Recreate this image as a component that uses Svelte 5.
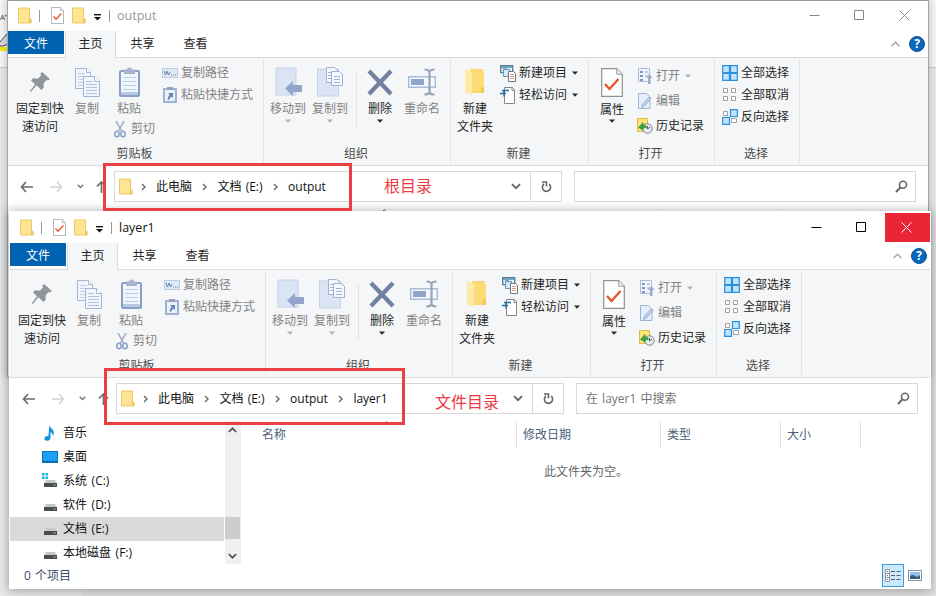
<script>
  const windows = [
    {
      id: 'root',
      title: 'output',
      path: ['此电脑', '文档 (E:)', 'output'],
      search: '',
      active: false
    },
    {
      id: 'layer',
      title: 'layer1',
      path: ['此电脑', '文档 (E:)', 'output', 'layer1'],
      search: '在 layer1 中搜索',
      active: true
    }
  ]

  const drives = [
    { name: '音乐', icon: 'music' },
    { name: '桌面', icon: 'desktop' },
    { name: '系统 (C:)', icon: 'system' },
    { name: '软件 (D:)', icon: 'drive' },
    { name: '文档 (E:)', icon: 'drive', selected: true },
    { name: '本地磁盘 (F:)', icon: 'drive' }
  ]
</script>

{#snippet folder()}
  <svg width="14" height="17" viewBox="0 0 14 17">
    <path d="M.5 1h11v11l1.5 .5v3.5H.5z" fill="#ffe593" stroke="#ecc964" />
    <path d="M11.5 15.5v-4l1.5 1v3z" fill="#f8d775" stroke="#e3b94c" stroke-width=".7" />
  </svg>
{/snippet}

{#snippet caret()}
  <svg class="caret" width="6" height="4" viewBox="0 0 6 4"><path d="M0 .5h6L3 3.7z" fill="currentColor" /></svg>
{/snippet}

{#snippet crumbArrow()}
  <svg width="5" height="8" viewBox="0 0 5 8"><path d="M1 1l3 3-3 3" fill="none" stroke="#666" stroke-width="1.4" /></svg>
{/snippet}

{#snippet checkDoc(w, h)}
  <svg width={w} height={h} viewBox="0 0 22 29" preserveAspectRatio="none">
    <path d="M.7 .7h15l5.6 5.6v22H.7z" fill="#fff" stroke="#8b929a" stroke-width="1.2" />
    <path d="M15.7 .7v5.600h5.600" fill="#eee" stroke="#9aa0a8" />
    <path d="M4 16l4.500 5L17.500 11" fill="none" stroke="#e4572a" stroke-width="2.4" />
  </svg>
{/snippet}

{#snippet ribbon()}
  <div class="ribbon">
    <section class="group clipboard">
      <div class="tools">
        <div class="big pin">
          <div class="pic">
            <svg width="22" height="22" viewBox="0 0 22 22">
              <path d="M13 1l8 7-2 1.500-1.500-.5-3 3.500.3 4L12.500 19l-5-4.800L1.800 21 .8 20.200l5.200-7L2 9.500l2-2.200 4.800.4L12 4.500l-.5-2z" fill="#8f969c" />
            </svg>
          </div>
          <span>固定到快</span><span>速访问</span>
        </div>
        <div class="big copy dim">
          <div class="pic">
            <svg width="25" height="29" viewBox="0 0 25 29">
              <g stroke="#93abd2">
                <path d="M.5 .5h11l4 4v16H.5z" fill="#f2f6fd" /><path d="M11.500 .5v4h4" fill="#fff" />
                <path d="M3 5.500h7M3 8.500h10M3 11.500h10M3 14.500h10M3 17.500h10" stroke="#b9cae5" />
                <path d="M8.500 8.500h11l5 5v15h-16z" fill="#f2f6fd" /><path d="M19.500 8.500v5h5" fill="#fff" />
                <path d="M11 13.500h6M11 16.500h11M11 19.500h11M11 22.500h11M11 25.500h11" stroke="#a5badb" />
              </g>
            </svg>
          </div>
          <span>复制</span>
        </div>
        <div class="paste dim">
          <div class="big">
            <div class="pic">
              <svg width="21" height="30" viewBox="0 0 21 30">
                <rect x="1" y="4" width="19" height="25" rx="1" fill="#f1f6fd" stroke="#7590bf" stroke-width="2" />
                <path d="M5 2.500h3a2.500 2 0 0 1 5 0h3V7H5z" fill="#9aa9c4" />
                <path d="M4 10.500h13M4 14.500h13M4 18.500h13M4 22.500h13" stroke="#b3c6e4" />
                <path d="M2 26.500h17" stroke="#afc0dc" stroke-width="3" />
              </svg>
            </div>
            <span>粘贴</span>
          </div>
          <div class="small cut">
            <svg width="12" height="17" viewBox="0 0 12 17">
              <path d="M2 0l5.500 10M10 0L4.500 10" stroke="#8e9fb9" stroke-width="1.5" />
              <ellipse cx="3" cy="13" rx="2.200" ry="2.800" fill="none" stroke="#7292c2" stroke-width="1.5" />
              <ellipse cx="9" cy="13" rx="2.200" ry="2.800" fill="none" stroke="#7292c2" stroke-width="1.5" />
            </svg>
            <span>剪切</span>
          </div>
        </div>
        <div class="stack paths dim">
          <div class="small">
            <svg width="16" height="10" viewBox="0 0 16 10">
              <rect x=".5" y=".5" width="15" height="9" fill="#d8e7fa" stroke="#b3c6df" />
              <path d="M2 3l1.500 4L5 3l1.500 4L8 4M9 7h1M11 7h1M13 7h1" fill="none" stroke="#526d96" />
            </svg>
            <span>复制路径</span>
          </div>
          <div class="small">
            <svg width="14" height="16" viewBox="0 0 14 16">
              <rect x="1" y="2" width="12" height="13" fill="#e9f1fc" stroke="#8fa7cf" stroke-width="2" />
              <path d="M4 0h6v3H4z" fill="#8292ad" />
              <path d="M5 6h5v5L8.400 9.400Q6.500 11 6 13L4.500 12Q5 9.500 6.700 7.700z" fill="#4d71ae" />
            </svg>
            <span>粘贴快捷方式</span>
          </div>
        </div>
      </div>
      <h2>剪贴板</h2>
    </section>

    <section class="group organize">
      <div class="tools">
        <div class="big dim move">
          <div class="pic">
            <svg width="27" height="30" viewBox="0 0 27 30">
              <path d="M1 1h20v27H1z" fill="#d6e2f5" stroke="#bccde7" />
              <path d="M10 21.500l8-7.500v4h9v7h-9v4z" fill="#8198c3" />
            </svg>
          </div>
          <span>移动到</span>{@render caret()}
        </div>
        <div class="big dim move">
          <div class="pic">
            <svg width="27" height="30" viewBox="0 0 27 30">
              <path d="M.5 2h21v27H.5z" fill="#d6e2f5" stroke="#bccde7" />
              <g fill="#f5f9ff" stroke="#8fa8cf">
                <path d="M9.500 .5h8l3 3v12h-11z" /><path d="M14.500 4.500h8l3 3v11h-11z" />
                <path d="M11 5.500h3M11 8.500h3M11 11.500h3M17 9.500h6M17 12.500h6M17 15.500h6" />
              </g>
            </svg>
          </div>
          <span>复制到</span>{@render caret()}
        </div>
        <div class="divider"></div>
        <div class="big delete">
          <div class="pic">
            <svg width="26" height="27" viewBox="0 0 26 27"><path d="M2 2l22 23M24 2L2 25" stroke="#7181a2" stroke-width="4.3" /></svg>
          </div>
          <span>删除</span>{@render caret()}
        </div>
        <div class="big dim rename">
          <div class="pic">
            <svg width="28" height="28" viewBox="0 0 28 28">
              <path d="M.7 8.700h26.600v10.600H.7z" fill="#f5f9ff" stroke="#9bb1d6" stroke-width="1.4" />
              <path d="M3 11h13v6H3z" fill="#7d97c2" />
              <path d="M16.500 1.500q4 0 5 2 1-2 5-2M21.500 3v22M16.500 26.500q4 0 5-2 1 2 5 2" fill="none" stroke="#8795ad" stroke-width="2.2" />
            </svg>
          </div>
          <span>重命名</span>
        </div>
      </div>
      <h2>组织</h2>
    </section>

    <section class="group create">
      <div class="tools">
        <div class="big">
          <div class="pic">
            <svg width="20" height="28" viewBox="0 0 20 28">
              <path d="M5 1h13v22l-3 2H5z" fill="#fbd873" />
              <path d="M0 1l7 3v23L0 24z" fill="#ffe9a6" />
              <path d="M7 4h12v19H7z" fill="#fddc75" /><path d="M16 19h3v6h-3z" fill="#f5c951" />
            </svg>
          </div>
          <span>新建</span><span>文件夹</span>
        </div>
        <div class="stack">
          <div class="small">
            <svg width="16" height="17" viewBox="0 0 16 17">
              <path d="M.7 .7h12v7H.7z" fill="#e5f1fb" stroke="#587b95" stroke-width="1.3" />
              <path d="M1 2h11M3 4h3v4" fill="none" stroke="#4d90b5" stroke-width="1.5" />
              <path d="M3.500 4.500h6v7h-6z" fill="#d2e9fb" stroke="#6d94b2" />
              <path d="M8.500 6.500h5l2 2v8h-7z" fill="#fff" stroke="#6f7880" />
              <path d="M10 9.500h4M10 11.500h4M10 13.500h4" stroke="#df9b8a" />
            </svg>
            <span>新建项目</span>{@render caret()}
          </div>
          <div class="small">
            <svg width="16" height="17" viewBox="0 0 16 17">
              <path d="M4.500 .5h8l2 2v14h-10z" fill="#fff" stroke="#80878d" />
              <path d="M12 1v2.500h2.500" fill="none" stroke="#80878d" />
              <path d="M2 3.500h7M0 6.500h6M4 3.500v6" stroke="#1f7197" stroke-width="1.4" />
            </svg>
            <span>轻松访问</span>{@render caret()}
          </div>
        </div>
      </div>
      <h2>新建</h2>
    </section>

    <section class="group open">
      <div class="tools">
        <div class="big props">
          <div class="pic">{@render checkDoc(22, 29)}</div>
          <span>属性</span>{@render caret()}
        </div>
        <div class="stack">
          <div class="small dim">
            <svg width="16" height="16" viewBox="0 0 16 16">
              <path d="M1.500 .5h11v13h-11z" fill="#eef4fd" stroke="#9eb3d5" />
              <path d="M3 3h3v2H3zM3 7h3v2H3zM3 11h3v2H3z" fill="#6888bb" /><path d="M8 4h3M8 8h3" stroke="#7d98c5" />
              <path d="M11 16V10H9l3.500-4 3 4h-2v6z" fill="#8aa1c6" />
            </svg>
            <span>打开</span>{@render caret()}
          </div>
          <div class="small dim">
            <svg width="16" height="16" viewBox="0 0 16 16">
              <path d="M1.500 .5h8l3.500 3.500v11.500H1.500z" fill="#e3edfb" stroke="#91a9cf" />
              <path d="M5 12l7-8 2 1.500-7 8-2.500 1z" fill="#b9cae6" stroke="#7f9bc9" stroke-width=".8" />
            </svg>
            <span>编辑</span>
          </div>
          <div class="small">
            <svg width="16" height="16" viewBox="0 0 16 16">
              <path d="M.5 .5h10v13H.5z" fill="#ffe47a" stroke="#dbbc48" />
              <circle cx="10.500" cy="10.500" r="4.700" fill="#e7edf0" stroke="#7a8287" />
              <path d="M10.500 8v3l2.500-2" fill="none" stroke="#555" />
              <path d="M1.500 9.500l4.500-5v2.500q4 0 3 3-2-1-3 0v2z" fill="#3aa93a" stroke="#218226" stroke-width=".6" />
            </svg>
            <span>历史记录</span>
          </div>
        </div>
      </div>
      <h2>打开</h2>
    </section>

    <section class="group select">
      <div class="tools">
        <div class="stack">
          <div class="small">
            <svg width="16" height="16" viewBox="0 0 16 16">
              <path d="M.7 .7h6.800v6.800H.7zM8.500 .7h6.800v6.800H8.500zM.7 8.500h6.800v6.800H.7zM8.500 8.500h6.800v6.800H8.500z" fill="#bfe4ff" stroke="#2a90d9" stroke-width="1.2" />
            </svg>
            <span>全部选择</span>
          </div>
          <div class="small">
            <svg width="16" height="16" viewBox="0 0 16 16">
              <path d="M1.500 1.500h4v4h-4zM9.500 1.500h4v4h-4zM1.500 9.500h4v4h-4zM9.500 9.500h4v4h-4z" fill="#fff" stroke="#a1a1a1" />
            </svg>
            <span>全部取消</span>
          </div>
          <div class="small">
            <svg width="16" height="16" viewBox="0 0 16 16">
              <path d="M1.500 2.500h4v4h-4zM9.500 9.500h5v4h-5z" fill="#fff" stroke="#a1a1a1" />
              <path d="M8.500 .7h6.800v6.800H8.500zM.7 8.500h6.800v6.800H.7z" fill="#bfe4ff" stroke="#2a90d9" stroke-width="1.2" />
            </svg>
            <span>反向选择</span>
          </div>
        </div>
      </div>
      <h2>选择</h2>
    </section>
  </div>
{/snippet}

{#snippet columns(labels)}
  <div class="columns">
    {#each labels as label, i}
      <div class="col col-{i}">
        {label}
        {#if i === 0}
          <svg class="sort" width="7" height="4" viewBox="0 0 7 4"><path d="M.5 3.500l3-3 3 3" fill="none" stroke="#666" /></svg>
        {/if}
      </div>
    {/each}
  </div>
{/snippet}

<main>
  <div class="behind">
    <div class="doc-strip">
      <span>A⁺</span>
      <svg width="9" height="18" viewBox="0 0 9 18">
        <path d="M0 8L7 0l2 2v8l-6 2H0" fill="#ddd" stroke="#444" />
        <path d="M0 13h9v4H0z" fill="#f3ea14" />
      </svg>
    </div>
    <div class="sheet"></div>
  </div>

  {#each windows as win (win.id)}
    <div class="window {win.id}" class:active={win.active}>
      <header class="titlebar">
        <div class="quick">
          {@render folder()}
          <i class="bar"></i>
          {@render checkDoc(13, 17)}
          {@render folder()}
          <svg class="more" width="7" height="7" viewBox="0 0 7 7"><path d="M0 .7h7" stroke="#111" stroke-width="1.4" /><path d="M0 3h7L3.500 6.500z" fill="#111" /></svg>
          <i class="bar"></i>
        </div>
        <h1>{win.title}</h1>
        <div class="controls">
          <button type="button" aria-label="最小化"><svg width="11" height="11" viewBox="0 0 11 11"><path d="M.5 5.500h10" /></svg></button>
          <button type="button" aria-label="最大化"><svg width="11" height="11" viewBox="0 0 11 11"><path d="M.5 .5h9v9h-9z" /></svg></button>
          <button type="button" class="close" aria-label="关闭"><svg width="11" height="11" viewBox="0 0 11 11"><path d="M.5 .5l10 10M10.500 .5l-10 10" /></svg></button>
        </div>
      </header>

      <nav class="tabs">
        <span class="file">文件</span>
        <span class="tab current">主页</span>
        <span class="tab">共享</span>
        <span class="tab">查看</span>
        <div class="help">
          <svg width="9" height="6" viewBox="0 0 9 6"><path d="M.5 5.200l4-4 4 4" fill="none" stroke="#a5a5a5" stroke-width="1.4" /></svg>
          <b>?</b>
        </div>
      </nav>

      {@render ribbon()}

      <div class="address">
        <div class="arrows">
          <svg width="13" height="12" viewBox="0 0 13 12"><path d="M6 1L1.500 6 6 11M1.500 6H13" fill="none" stroke="#6b6b6b" stroke-width="1.7" /></svg>
          <svg width="13" height="12" viewBox="0 0 13 12"><path d="M7 1l4.500 5L7 11M11.500 6H0" fill="none" stroke="#d4d4d4" stroke-width="1.5" /></svg>
          <svg width="7" height="5" viewBox="0 0 7 5"><path d="M.7 .8l2.800 2.800L6.300 .8" fill="none" stroke="#777" stroke-width="1.4" /></svg>
          <svg width="11" height="12" viewBox="0 0 11 12"><path d="M1 5.500L5.500 1 10 5.500M5.500 1v11" fill="none" stroke="#6b6b6b" stroke-width="1.7" /></svg>
        </div>
        <div class="location">
          {@render folder()}
          {#each win.path as part}
            {@render crumbArrow()}
            <span>{part}</span>
          {/each}
          <svg class="history" width="10" height="7" viewBox="0 0 10 7"><path d="M1 1.200l4 4 4-4" fill="none" stroke="#666" stroke-width="1.9" /></svg>
          <div class="refresh">
            <svg width="11" height="12" viewBox="0 0 11 12">
              <path d="M8.200 3.200A4.100 4.100 0 1 1 3 3" fill="none" stroke="#666" stroke-width="1.6" />
              <path d="M1 1h4.500v4.500" fill="none" stroke="#666" stroke-width="1.5" />
            </svg>
          </div>
        </div>
        <div class="search">
          <span>{win.search}</span>
          <svg width="13" height="13" viewBox="0 0 13 13"><circle cx="8" cy="4.800" r="3.500" fill="none" stroke="#666" stroke-width="1.6" /><path d="M5.500 7.300L1 12" stroke="#666" stroke-width="2" /></svg>
        </div>
      </div>

      {#if win.active}
        <div class="body">
          <ul class="tree">
            {#each drives as d}
              <li class:selected={d.selected}>
                <svg width="16" height="16" viewBox="0 0 16 16">
                  {#if d.icon === 'music'}
                    <path d="M7.500 0q.3 2.500 3 4.500 2.500 2.500.5 6.500-.2-3-2.500-4v5.500q0 3-3.200 3.300-3-.1-2.900-2.300.5-2.800 4-2.500z" fill="#1191dd" />
                  {:else if d.icon === 'desktop'}
                    <rect x=".5" y="2.500" width="15" height="11" fill="#1aa0f5" stroke="#0c72bb" /><path d="M1 12.500h14" stroke="#064f8d" stroke-dasharray="2 1" />
                  {:else}
                    {#if d.icon === 'system'}
                      <path d="M0 0h2.500v2.500H0zM3.500 0H6v2.500H3.500zM0 3.500h2.500V6H0zM3.500 3.500H6V6H3.500z" fill="#16b5dd" />
                    {/if}
                    <path d="M4 7h9l2 3.500H2z" fill="#c5c8c7" /><path d="M2 10h13v4H2z" fill="#484d4e" /><path d="M11.500 12h2" stroke="#9ee6a0" />
                  {/if}
                </svg>
                <span>{d.name}</span>
              </li>
            {/each}
          </ul>
          <div class="scroll">
            <svg width="9" height="6" viewBox="0 0 9 6"><path d="M.8 5l3.700-3.700L8.200 5" fill="none" stroke="#505050" stroke-width="1.7" /></svg>
            <div class="thumb"></div>
            <svg width="9" height="6" viewBox="0 0 9 6"><path d="M.8 1l3.700 3.700L8.200 1" fill="none" stroke="#505050" stroke-width="1.7" /></svg>
          </div>
          <div class="list">
            {@render columns(['名称', '修改日期', '类型', '大小'])}
            <p>此文件夹为空。</p>
          </div>
        </div>
        <footer>
          <span>0 个项目</span>
          <div class="view on">
            <svg width="16" height="13" viewBox="0 0 16 13">
              <path d="M.5 .5h4v12h-4zM.5 4.500h4M.5 8.500h4" fill="#fff" stroke="#8f9aa5" />
              <path d="M2 2.500h1M2 6.500h1M2 10.500h1" stroke="#c0392b" />
              <path d="M6 2.500h4M11.500 2.500h4M6 6.500h4M11.500 6.500h4M6 10.500h4M11.500 10.500h4" stroke="#526470" />
            </svg>
          </div>
          <div class="view">
            <svg width="14" height="11" viewBox="0 0 14 11">
              <rect x=".5" y=".5" width="13" height="10" fill="#fff" stroke="#8494a3" />
              <path d="M2 2h10v7H2z" fill="#8fc0ee" /><path d="M2 6q3-2 5 0t5-1v4H2z" fill="#3a5b78" />
            </svg>
          </div>
        </footer>
      {:else}
        <div class="body">
          <div class="list offset">{@render columns(['', '', '', ''])}</div>
        </div>
      {/if}
    </div>
  {/each}

  <div class="mark mark-root"></div>
  <div class="mark mark-layer"></div>
  <span class="note note-root">根目录</span>
  <span class="note note-layer">文件目录</span>
</main>

<style>
  :global(body) {
    overflow: hidden;
  }

  main {
    position: relative;
    width: 936px;
    height: 596px;
    overflow: hidden;
    background: #e9eaeb;
    color: #262626;
    font: 12px/18px 'Open Sans', 'Noto Sans CJK SC', sans-serif;
    white-space: nowrap;
  }

  svg {
    display: block;
    flex-shrink: 0;
  }

  h1, h2, p, ul {
    margin: 0;
    padding: 0;
    font-size: 12px;
    font-weight: 400;
  }

  .behind {
    display: flex;
    flex-direction: column;
    justify-content: space-between;
    height: 100%;
  }

  .doc-strip {
    height: 67px;
    background: #f7f7f7;
    border-bottom: 1px solid #cfcfcf;
  }

  .doc-strip span {
    display: block;
    height: 26px;
    margin-top: 8px;
    font-size: 8px;
    letter-spacing: -0.5px;
    color: #444;
  }

  .sheet {
    height: 10px;
    margin-left: 82px;
    background: #e4e4e4;
  }

  .window {
    position: absolute;
    display: flex;
    flex-direction: column;
    width: 920px;
    background: #fff;
  }

  .root {
    left: 8px;
    top: 0;
    height: 376px;
    overflow: hidden;
    box-shadow: 0 0 0 1px #a5a5a5, 0 0 8px 2px rgba(0, 0, 0, 0.2);
  }

  .root .titlebar {
    box-shadow: inset 0 1px #999;
  }

  .layer {
    left: 10px;
    top: 212px;
    height: 376px;
    box-shadow: 0 0 0 1px #fff, 0 1px 10px 2px rgba(0, 0, 0, 0.32);
  }

  .titlebar {
    display: flex;
    align-items: center;
    height: 31px;
    flex-shrink: 0;
  }

  .quick {
    display: flex;
    align-items: center;
    padding-left: 10px;
  }

  .bar {
    width: 1px;
    height: 12px;
    margin: 0 11px 0 7px;
    background: #999;
  }

  .quick svg + svg {
    margin-left: 8px;
  }

  .quick .more {
    margin-left: 8px !important;
    margin-top: 3px;
  }

  .more + .bar {
    margin: 0 7px 0 8px;
  }

  h1 {
    color: #999;
    font-size: 12.5px;
    margin-top: 1px;
  }

  .active h1 {
    color: #111;
  }

  .controls {
    display: flex;
    align-self: stretch;
    margin-left: auto;
  }

  .controls button {
    display: grid;
    place-items: center;
    width: 45px;
    height: 29px;
    margin-top: 1px;
    padding: 0 2px 0 0;
    border: 0;
    background: none;
  }

  .controls path {
    fill: none;
    stroke: #888;
  }

  .active .controls path {
    stroke: #000;
  }

  .active .controls .close {
    background: #e92536;
  }

  .active .controls .close path {
    stroke: #fff;
  }

  .tabs {
    display: flex;
    height: 26px;
    flex-shrink: 0;
    line-height: 25px;
    text-align: center;
  }

  .file {
    width: 56px;
    height: 23px;
    background: #0063b1;
    color: #fff;
  }

  .tab {
    width: 53px;
  }

  .current {
    position: relative;
    width: 49px;
    height: 27px;
    margin-left: 1px;
    background: #f5f6f7;
    border: solid #dadbdc;
    border-width: 0 1px;
    z-index: 1;
  }

  .help {
    display: flex;
    align-items: center;
    gap: 9px;
    margin: 0 3px 0 auto;
  }

  .help b {
    width: 14px;
    height: 14px;
    border: 1px solid #155391;
    border-radius: 50%;
    background: #0868bd;
    color: #fff;
    font-size: 12px;
    line-height: 14px;
  }

  .ribbon {
    display: flex;
    height: 107px;
    flex-shrink: 0;
    background: #f5f6f7;
    border: solid #dadbdc;
    border-width: 1px 0;
  }

  .group {
    display: flex;
    flex-direction: column;
    justify-content: space-between;
    box-sizing: border-box;
    margin: 2px 0;
    border-right: 1px solid #e2e3e4;
  }

  .clipboard { width: 256px; }
  .organize { width: 187px; }
  .create { width: 138px; }
  .open { width: 126px; }
  .select { width: 85px; }

  h2 {
    height: 18px;
    padding-right: 2px;
    color: #4c4c4c;
    text-align: center;
  }

  .tools {
    display: flex;
    align-items: flex-start;
  }

  .big {
    display: flex;
    flex-direction: column;
    align-items: center;
    padding-top: 4px;
  }

  .pic {
    display: grid;
    place-items: center;
    height: 36px;
  }

  .dim {
    color: #838383;
  }

  .dim svg {
    opacity: 0.85;
  }

  .big .caret {
    margin-top: 1px;
  }

  .dim .caret {
    opacity: 0.6;
  }

  .pin { width: 64px; }
  .copy { width: 30px; }
  .copy .pic { place-items: center start; }
  .paste { width: 48px; margin-left: 3px; }

  .copy .pic svg {
    margin-left: 1px;
  }

  .small {
    display: flex;
    align-items: center;
    height: 22px;
  }

  .small svg:first-child {
    width: 16px;
  }

  .small span {
    margin-left: 3px;
  }

  .small .caret {
    margin-left: 5px;
  }

  .cut {
    margin-left: 7px;
  }

  .paths {
    margin-left: 9px;
  }

  .stack {
    padding-top: 2px;
  }

  .move {
    width: 42px;
  }

  .organize .tools {
    padding-left: 3px;
  }

  .organize .move {
    flex-shrink: 0;
  }

  .divider {
    width: 1px;
    height: 56px;
    margin: 12px 4px 0 5px;
    background: #e2e3e4;
  }

  .delete {
    width: 38px;
  }

  .rename {
    width: 46px;
  }

  .create .tools {
    padding-left: 6px;
    gap: 7px;
  }

  .open .tools {
    padding-left: 11px;
    gap: 13px;
  }

  .open .stack {
    padding-top: 3px;
  }

  .props .caret {
    margin-top: 0;
  }

  .props span {
    margin-top: 1px;
  }

  .open .small {
    height: 25px;
  }

  .select .tools {
    padding-left: 7px;
  }

  .address {
    display: flex;
    height: 43px;
    box-sizing: border-box;
    padding: 5px 12px 7px;
    flex-shrink: 0;
  }

  .arrows {
    display: flex;
    align-items: center;
    width: 94px;
    flex-shrink: 0;
  }

  .arrows svg:nth-child(2) { margin-left: 17px; }
  .arrows svg:nth-child(3) { margin-left: 14px; }
  .arrows svg:nth-child(4) { margin-left: 12px; }

  .location,
  .search {
    display: flex;
    align-items: center;
    box-sizing: border-box;
    height: 31px;
    border: 1px solid #d9d9d9;
    color: #111;
  }

  .location {
    width: 448px;
    padding-left: 4px;
    word-spacing: 1px;
  }

  .location > svg:first-child {
    margin-right: -1px;
  }

  .location span {
    margin-left: 10.5px;
  }

  .location span + svg {
    margin-left: 10px;
  }

  .location > svg:nth-child(2) {
    margin-left: 8.5px;
  }

  .location .history {
    margin-left: auto !important;
  }

  .refresh {
    display: grid;
    place-items: center;
    width: 30px;
    height: 100%;
    margin-left: 9px;
    border-left: 1px solid #d9d9d9;
  }

  .search {
    flex: 1;
    justify-content: space-between;
    margin-left: 12px;
    padding: 0 7px 0 9px;
    color: #757575;
    word-spacing: 1px;
  }

  .body {
    display: flex;
    height: 144px;
    flex-shrink: 0;
  }

  .tree {
    width: 214px;
    list-style: none;
    color: #111;
    word-spacing: 1.5px;
  }

  .tree li {
    display: flex;
    align-items: center;
    gap: 5px;
    height: 24px;
    padding-left: 32px;
  }

  .tree .selected {
    background: #d9d9d9;
  }

  .scroll {
    display: flex;
    flex-direction: column;
    align-items: center;
    box-sizing: border-box;
    width: 16px;
    height: 143px;
    margin-left: 1px;
    padding: 6px 1px 5px 0;
    background: #f0f0f0;
  }

  .thumb {
    width: 15px;
    height: 22px;
    margin: auto 0 14px;
    background: #cdcdcd;
  }

  .list {
    flex: 1;
    padding-left: 11px;
  }

  .offset {
    padding-left: 242px;
  }

  .list p {
    margin: 15px 10px 0 0;
    color: #666;
    text-align: center;
  }

  .columns {
    display: flex;
    height: 27px;
    line-height: 28px;
    color: #4c607a;
  }

  .col {
    position: relative;
    box-sizing: border-box;
    padding-left: 6px;
    border-right: 1px solid #e2e2e2;
  }

  .col-0 { width: 265px; padding-left: 10px; }
  .col-1 { width: 144px; }
  .col-2 { width: 120px; }
  .col-3 { width: 80px; }

  .sort {
    position: absolute;
    left: 131px;
    top: 0;
  }

  footer {
    display: flex;
    align-items: center;
    height: 23px;
    margin-top: -1px;
    padding: 0 8px 0 14px;
    color: #3b4a66;
    word-spacing: 1px;
  }

  footer span {
    margin-right: auto;
  }

  .view {
    display: grid;
    place-items: center;
    height: 23px;
  }

  .on {
    box-sizing: border-box;
    width: 22px;
    margin-right: 4px;
    background: #cce8ff;
    border: 1px solid #3c9dd9;
  }

  .mark {
    position: absolute;
    box-sizing: border-box;
    border: 3px solid #e94043;
  }

  .mark-root {
    left: 103px;
    top: 163px;
    width: 249px;
    height: 48px;
  }

  .mark-layer {
    left: 104px;
    top: 368px;
    width: 301px;
    height: 57px;
  }

  .note {
    position: absolute;
    color: #ed3b45;
    font-size: 16px;
    line-height: 20px;
  }

  .note-root {
    left: 384px;
    top: 176px;
  }

  .note-layer {
    left: 435px;
    top: 392px;
  }
</style>
